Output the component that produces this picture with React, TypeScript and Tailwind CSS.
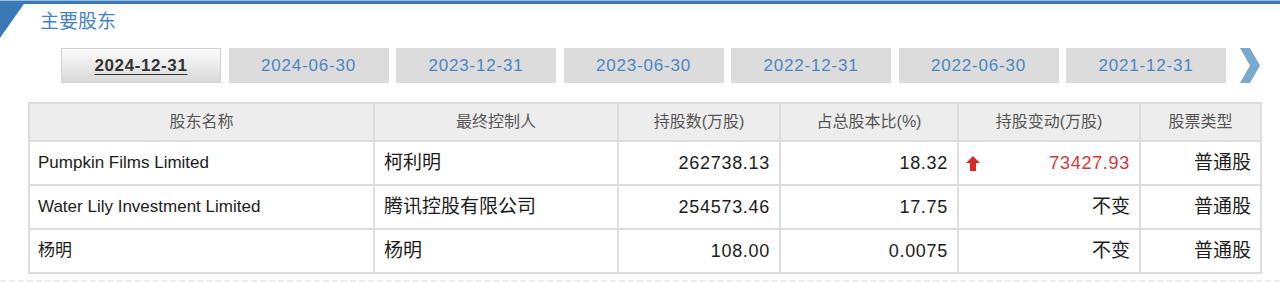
import React from "react";

const tabs = ["2024-12-31", "2024-06-30", "2023-12-31", "2023-06-30", "2022-12-31", "2022-06-30", "2021-12-31"];

const headers = ["股东名称", "最终控制人", "持股数(万股)", "占总股本比(%)", "持股变动(万股)", "股票类型"];

const rows = [
  { name: "Pumpkin Films Limited", ctrl: "柯利明", shares: "262738.13", pct: "18.32", change: "73427.93", up: true, type: "普通股" },
  { name: "Water Lily Investment Limited", ctrl: "腾讯控股有限公司", shares: "254573.46", pct: "17.75", change: "不变", up: false, type: "普通股" },
  { name: "杨明", ctrl: "杨明", shares: "108.00", pct: "0.0075", change: "不变", up: false, type: "普通股" },
];

const widths = ["w-[345px]", "w-[244px]", "w-[162px]", "w-[178px]", "w-[182px]", "w-[121px]"];

export default function App() {
  return (
    <div className="relative w-[1280px] h-[282px] overflow-hidden bg-white font-['Liberation_Sans','Noto_Sans_CJK_SC',sans-serif] text-[#1c1c1c]">
      <svg className="absolute left-0 top-0" width="30" height="40" viewBox="0 0 30 40">
        <polygon points="0,1 26,1 0,38" fill="#3b78b6" />
      </svg>
      <div className="h-[1px] bg-[#9dbde0]" />
      <div className="h-[3px] bg-[#3b78b6]" />
      <div className="flex h-[36px] items-center pl-[40px] text-[19px] text-[#4283c4]">主要股东</div>

      <div className="mt-[8px] flex items-center pl-[61px]">
        <div className="flex gap-[7.5px]">
          {tabs.map((t, i) =>
            i === 0 ? (
              <div
                key={t}
                className="flex h-[35px] w-[160px] items-center justify-center border border-[#d2d2d2] bg-gradient-to-b from-[#fcfcfc] to-[#d9d9d9] text-[17px] font-bold tracking-[0.6px] text-[#333] underline underline-offset-[3px]"
              >
                {t}
              </div>
            ) : (
              <div
                key={t}
                className="flex h-[35px] w-[160px] items-center justify-center bg-[#dcdcdc] text-[17px] tracking-[0.8px] text-[#4a86c3]"
              >
                {t}
              </div>
            )
          )}
        </div>
        <svg className="ml-[14px]" width="21" height="35" viewBox="0 0 21 35">
          <polygon points="0,0 10,0 20,17.5 10,35 0,35 10,17.5" fill="#7ba8cd" />
        </svg>
      </div>

      <div className="mx-[28px] mt-[19px]">
        <table className="w-[1232px] table-fixed border-collapse border-2 border-[#dddddd]">
          <colgroup>
            {widths.map((w, i) => (
              <col key={i} className={w} />
            ))}
          </colgroup>
          <thead>
            <tr className="h-[38px] bg-[#ededed]">
              {headers.map((h) => (
                <th key={h} className="border-2 border-[#dddddd] text-center text-[16px] font-normal text-[#555]">
                  {h}
                </th>
              ))}
            </tr>
          </thead>
          <tbody>
            {rows.map((r, idx) => (
              <tr key={idx} className="h-[44px]">
                <td className="border-2 border-[#dddddd] pl-[8px] text-left text-[17px]">{r.name}</td>
                <td className="border-2 border-[#dddddd] pl-[9px] text-left text-[19px]">{r.ctrl}</td>
                <td className="border-2 border-[#dddddd] pr-[9px] text-right text-[18px] tracking-[0.7px]">{r.shares}</td>
                <td className="border-2 border-[#dddddd] pr-[9px] text-right text-[18px] tracking-[0.7px]">{r.pct}</td>
                <td className="border-2 border-[#dddddd] pl-[7px] pr-[9px]">
                  <div className="flex items-center justify-between">
                    {r.up ? (
                      <svg width="14" height="15" viewBox="0 0 14 15">
                        <polygon points="7,0 14,7 10,7 10,15 4,15 4,7 0,7" fill="#d42a2a" />
                      </svg>
                    ) : (
                      <span />
                    )}
                    <span className={r.up ? "text-[18px] tracking-[0.7px] text-[#d3373a]" : "text-[19px]"}>{r.change}</span>
                  </div>
                </td>
                <td className="border-2 border-[#dddddd] pr-[9px] text-right text-[19px]">{r.type}</td>
              </tr>
            ))}
          </tbody>
        </table>
      </div>
      <div className="mt-[6px] h-[3px] border-t-[3px] border-dashed border-[#ececec]" />
    </div>
  );
}
